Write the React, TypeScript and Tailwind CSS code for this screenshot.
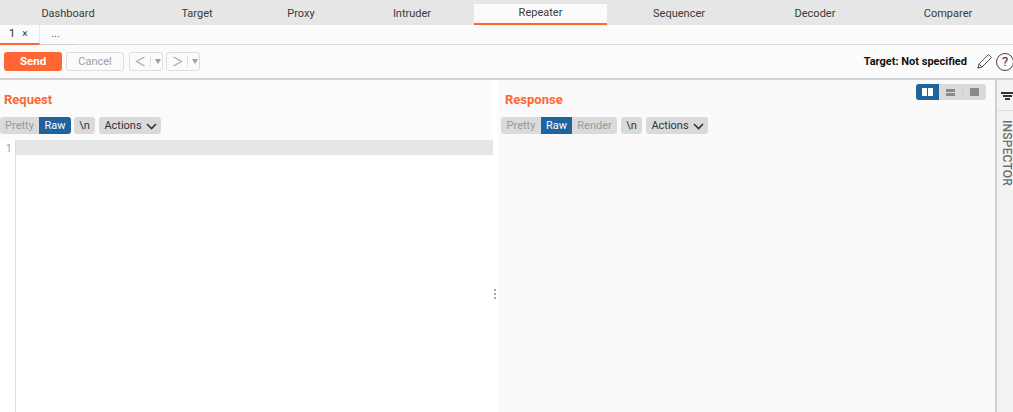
const font = { fontFamily: 'Roboto, "Noto Sans", sans-serif' };

function TopTab({ label, w, active, extra = "" }: { label: string; w: string; active?: boolean; extra?: string }) {
  return (
    <div
      className={`${w} ${extra} flex items-center justify-center text-[11px] text-[#3a3a3a] ${
        active ? "bg-[#fbfbfb] border-b-2 border-[#ff6633] mt-[4px] h-[21px]" : "h-[25px] pt-[3px]"
      }`}
    >
      {label}
    </div>
  );
}

function Seg({ label, kind, w }: { label: string; kind: "off" | "on" | "plain"; w: string }) {
  const c =
    kind === "on"
      ? "bg-[#1f639c] text-white"
      : kind === "off"
        ? "bg-[#dadada] text-[#999999]"
        : "bg-[#dadada] text-[#333333] rounded-[3px]";
  return <div className={`h-[17px] ${w} pt-[1px] flex items-center justify-center text-[11px] ${c}`}>{label}</div>;
}

function Actions() {
  return (
    <div className="h-[17px] w-[62px] rounded-[3px] bg-[#dadada] text-[#333333] text-[11px] flex items-center justify-center gap-[4px] pl-[1px] pt-[1px]">
      Actions
      <svg width="11" height="7" viewBox="0 0 11 7" fill="none" stroke="#333333" strokeWidth="1.6">
        <path d="M1 1l4.5 4.5L10 1" />
      </svg>
    </div>
  );
}

function HistoryButton({ dir }: { dir: "l" | "r" }) {
  return (
    <div className="w-[34px] h-[19px] rounded-[3px] border border-[#dedede] bg-[#fbfbfb] flex items-center pl-[5px] gap-[4px]">
      <svg width="11" height="11" viewBox="0 0 11 11" fill="none" stroke="#a8a8a8" strokeWidth="1.2">
        <path d={dir === "l" ? "M9.5 1L1.5 5.5L9.5 10" : "M1.5 1L9.5 5.5L1.5 10"} />
      </svg>
      <div className="w-px h-[11px] bg-[#dddddd]" />
      <svg width="6" height="5" viewBox="0 0 6 5" fill="#a0a0a0">
        <path d="M0 0h6L3 5z" />
      </svg>
    </div>
  );
}

export default function App() {
  return (
    <div style={font} className="w-[1013px] h-[412px] overflow-hidden bg-white flex flex-col">
      {/* primary tabs */}
      <div className="h-[25px] shrink-0 bg-[#e6e6e6] flex">
        <TopTab label="Dashboard" w="w-[136px]" />
        <TopTab label="Target" w="w-[122px]" />
        <TopTab label="Proxy" w="w-[86px]" />
        <TopTab label="Intruder" w="w-[130px]" extra="pl-[6px]" />
        <TopTab label="Repeater" w="w-[133px]" active />
        <TopTab label="Sequencer" w="w-[144px]" />
        <TopTab label="Decoder" w="w-[128px]" />
        <TopTab label="Comparer" w="w-[134px]" extra="pl-[4px]" />
      </div>

      {/* repeater tabs */}
      <div className="h-[20px] shrink-0 bg-[#fbfbfb] border-b border-[#dedede] flex">
        <div className="w-[40px] h-[20px] border-b-2 border-[#ff6633] border-r border-r-[#e6e6e6] flex items-center pl-[9px] gap-[7px] text-[11px] text-[#333333]">
          <span>1</span>
          <span className="text-[10px] leading-none">×</span>
        </div>
        <div className="w-[34px] h-[20px] border-b border-[#cccccc] flex items-start justify-center text-[11px] leading-[17px] text-[#555555] pr-[3px]">
          ...
        </div>
      </div>

      {/* toolbar */}
      <div className="h-[35px] shrink-0 bg-[#fbfbfb] border-b-2 border-[#d2d2d8] flex items-center pl-[4px]">
        <div className="w-[58px] h-[19px] rounded-[3px] bg-[#ff6633] text-white text-[11.5px] font-bold flex items-center justify-center">
          Send
        </div>
        <div className="ml-[4px] w-[58px] h-[19px] pt-[1px] rounded-[3px] border border-[#dedede] text-[#a0a0a0] text-[11px] flex items-center justify-center">
          Cancel
        </div>
        <div className="ml-[5px]">
          <HistoryButton dir="l" />
        </div>
        <div className="ml-[3px]">
          <HistoryButton dir="r" />
        </div>
        <div className="ml-auto pt-[1px] text-[11px] font-bold text-[#111111]">Target: Not specified</div>
        <svg className="ml-[9px]" width="17" height="17" viewBox="0 0 17 17" fill="none" stroke="#555555" strokeWidth="1">
          <path d="M2 15l1-4L12.5 1.5l3 3L6 14z" />
          <path d="M3 11l3 3" />
          <path d="M2 15l1.2-.4-.8-.8z" fill="#555555" />
        </svg>
        <div className="ml-[3px] mr-[-1px] w-[18px] h-[18px] shrink-0 rounded-full border border-[#444444] text-[#333333] text-[13px] flex items-center justify-center">
          ?
        </div>
      </div>

      {/* main */}
      <div className="relative flex-1 flex min-h-0">
        <div className="w-[493px] flex flex-col shrink-0">
          <div className="h-[60px] bg-[#fbfbfb] shrink-0">
            <div className="pl-[4px] pt-[11px] h-[37px] text-[13px] font-bold text-[#ff6633] leading-[17px]">Request</div>
            <div className="flex items-center">
              <div className="flex rounded-[3px] overflow-hidden">
                <Seg label="Pretty" kind="off" w="w-[39px]" />
                <Seg label="Raw" kind="on" w="w-[32px]" />
              </div>
              <div className="ml-[3px]">
                <Seg label="\n" kind="plain" w="w-[21px]" />
              </div>
              <div className="ml-[4px]">
                <Actions />
              </div>
            </div>
          </div>
          <div className="flex-1 flex">
            <div className="w-[16px] border-r border-[#dddddd] text-[10px] text-[#999999] pl-[6px] pt-[2px] leading-[14px]">1</div>
            <div className="flex-1">
              <div className="h-[15px] bg-[#e6e6e6]" />
            </div>
          </div>
        </div>

        <div className="w-[4px] shrink-0 bg-white flex flex-col items-center justify-center gap-[2px] pt-[95px]">
          <div className="size-[2px] bg-[#a8a8a8]" />
          <div className="size-[2px] bg-[#a8a8a8]" />
          <div className="size-[2px] bg-[#a8a8a8]" />
        </div>

        <div className="w-[498px] shrink-0 bg-[#fafafa]">
          <div className="pl-[8px] pt-[11px] h-[37px] text-[13px] font-bold text-[#ff6633] leading-[17px]">Response</div>
          <div className="flex items-center pl-[4px]">
            <div className="flex rounded-[3px] overflow-hidden">
              <Seg label="Pretty" kind="off" w="w-[40px]" />
              <Seg label="Raw" kind="on" w="w-[31px]" />
              <Seg label="Render" kind="off" w="w-[45px]" />
            </div>
            <div className="ml-[4px]">
              <Seg label="\n" kind="plain" w="w-[21px]" />
            </div>
            <div className="ml-[4px]">
              <Actions />
            </div>
          </div>
        </div>

        {/* inspector rail */}
        <div className="flex-1 min-w-0 border-l-2 border-[#d0d0d0] bg-[#f3f3f3] flex flex-col">
          <div className="h-[31px] border-b border-[#dddddd] flex flex-col items-center justify-center gap-[1px] pl-[4px] pt-[1px]">
            <div className="w-[13px] h-[2px] bg-[#333333] shrink-0" />
            <div className="w-[9px] h-[2px] bg-[#333333] shrink-0" />
            <div className="w-[5px] h-[2px] bg-[#333333] shrink-0" />
          </div>
          <div className="pl-[2px] pt-[9px] text-[12px] font-medium tracking-[0.2px] text-[#6f6f6f] leading-[12px] [writing-mode:vertical-rl]">
            INSPECTOR
          </div>
        </div>

        {/* layout toggle */}
        <div className="absolute left-[916px] top-[4px] w-[70px] h-[16px] rounded-[3px] overflow-hidden flex bg-[#dadada]">
          <div className="w-[23px] bg-[#1f639c] flex items-center justify-center gap-px">
            <div className="w-[5px] h-[8px] bg-white" />
            <div className="w-[5px] h-[8px] bg-white" />
          </div>
          <div className="w-[24px] border-r border-[#cfcfcf] flex flex-col items-center justify-center gap-px">
            <div className="w-[9px] h-[3px] bg-[#8a8a8a]" />
            <div className="w-[9px] h-[3px] bg-[#8a8a8a]" />
          </div>
          <div className="flex-1 flex items-center justify-center">
            <div className="w-[9px] h-[8px] bg-[#8a8a8a]" />
          </div>
        </div>
      </div>
    </div>
  );
}
